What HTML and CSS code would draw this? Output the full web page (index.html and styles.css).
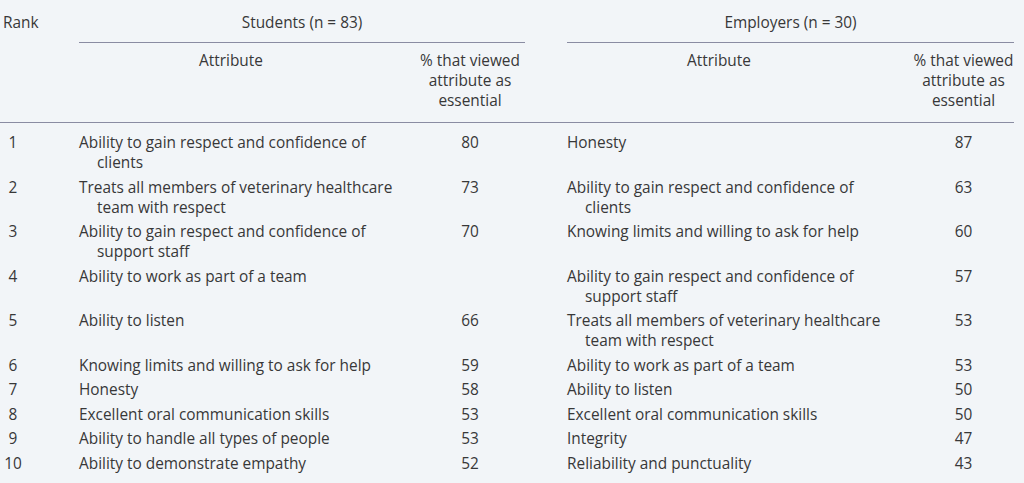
FILE: index.html
```html
<!DOCTYPE html>
<html lang="en">
<head>
<meta charset="utf-8">
<title>Attributes ranked as essential</title>
<link rel="stylesheet" href="styles.css">
</head>
<body>
<div class="table">
  <div class="row head1">
    <div class="c rank">Rank</div>
    <div class="c group g1">Students (n = 83)</div>
    <div class="c group g2">Employers (n = 30)</div>
  </div>
  <div class="row head2">
    <div class="c"></div>
    <div class="c hattr">Attribute</div>
    <div class="c pct">% that viewed<br>attribute as<br>essential</div>
    <div class="c"></div>
    <div class="c hattr">Attribute</div>
    <div class="c pct">% that viewed<br>attribute as<br>essential</div>
  </div>
  <div class="body">
    <div class="row"><div class="c num">1</div><div class="c attr">Ability to gain respect and confidence of clients</div><div class="c pct">80</div><div class="c"></div><div class="c attr">Honesty</div><div class="c pct">87</div></div>
    <div class="row"><div class="c num">2</div><div class="c attr">Treats all members of veterinary healthcare team with respect</div><div class="c pct">73</div><div class="c"></div><div class="c attr">Ability to gain respect and confidence of clients</div><div class="c pct">63</div></div>
    <div class="row"><div class="c num">3</div><div class="c attr">Ability to gain respect and confidence of support staff</div><div class="c pct">70</div><div class="c"></div><div class="c attr">Knowing limits and willing to ask for help</div><div class="c pct">60</div></div>
    <div class="row"><div class="c num">4</div><div class="c attr">Ability to work as part of a team</div><div class="c pct"></div><div class="c"></div><div class="c attr">Ability to gain respect and confidence of support staff</div><div class="c pct">57</div></div>
    <div class="row"><div class="c num">5</div><div class="c attr">Ability to listen</div><div class="c pct">66</div><div class="c"></div><div class="c attr">Treats all members of veterinary healthcare team with respect</div><div class="c pct">53</div></div>
    <div class="row"><div class="c num">6</div><div class="c attr">Knowing limits and willing to ask for help</div><div class="c pct">59</div><div class="c"></div><div class="c attr">Ability to work as part of a team</div><div class="c pct">53</div></div>
    <div class="row"><div class="c num">7</div><div class="c attr">Honesty</div><div class="c pct">58</div><div class="c"></div><div class="c attr">Ability to listen</div><div class="c pct">50</div></div>
    <div class="row"><div class="c num">8</div><div class="c attr">Excellent oral communication skills</div><div class="c pct">53</div><div class="c"></div><div class="c attr">Excellent oral communication skills</div><div class="c pct">50</div></div>
    <div class="row"><div class="c num">9</div><div class="c attr">Ability to handle all types of people</div><div class="c pct">53</div><div class="c"></div><div class="c attr">Integrity</div><div class="c pct">47</div></div>
    <div class="row"><div class="c num">10</div><div class="c attr">Ability to demonstrate empathy</div><div class="c pct">52</div><div class="c"></div><div class="c attr">Reliability and punctuality</div><div class="c pct">43</div></div>
  </div>
</div>
</body>
</html>
```
FILE: styles.css
```css
html, body {
  margin: 0;
  padding: 0;
  background: #f2f5f8;
}
body {
  font-family: "Open Sans", "Noto Sans", sans-serif;
  font-size: 15.4px;
  color: #383838;
  line-height: 20px;
}
.table {
  width: 1014px;
}
.row {
  display: grid;
  grid-template-columns: 79px 336px 110px 42px 346px 101px;
}
.head1 {
  padding-top: 12.5px;
}
.head1 .rank {
  padding-left: 3px;
}
.group {
  text-align: center;
  padding-bottom: 9px;
  border-bottom: 1.4px solid #8a8ca2;
}
.g1 { grid-column: 2 / 4; }
.g2 { grid-column: 5 / 7; }
.head2 {
  padding-top: 8px;
  padding-bottom: 11.5px;
  border-bottom: 1.4px solid #8a8ca2;
}
.hattr {
  text-align: center;
  padding-right: 32px;
}
.head2 .hattr:nth-child(5) {
  padding-right: 42px;
}
.pct {
  text-align: center;
  white-space: nowrap;
}
.body {
  padding-top: 8px;
}
.body .row .c {
  padding-top: 2.25px;
  padding-bottom: 2.25px;
}
.num {
  width: 20px;
  margin-left: 3px;
  text-align: center;
}
.attr {
  padding-left: 18px;
  text-indent: -18px;
  padding-right: 16px;
}
.attr:nth-child(5) {
  padding-right: 26px;
}
```
